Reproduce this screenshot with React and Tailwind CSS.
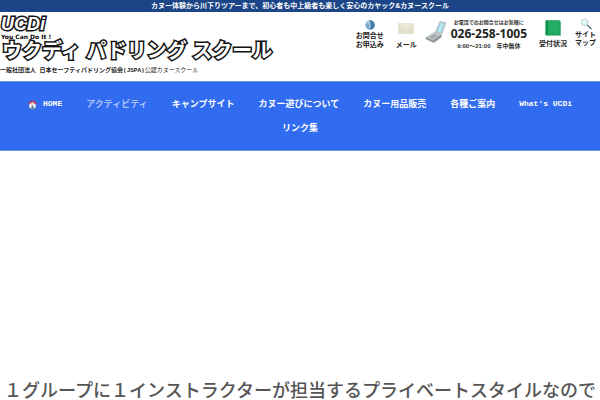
import { clsx } from "clsx";

const menu = [
  { label: "アクティビティ", dim: true },
  { label: "キャンプサイト" },
  { label: "カヌー遊びについて" },
  { label: "カヌー用品販売" },
  { label: "各種ご案内" },
  { label: "What's UCDi", latin: true },
  { label: "リンク集" },
];

function InfoIcon() {
  return (
    <svg viewBox="0 0 20 20" className="h-[10px] w-[10px]" aria-hidden="true">
      <circle cx="10" cy="10" r="9.5" fill="#7fabcb" />
      <path d="M10 .5a9.500 9.500 0 0 1 0 19z" fill="#3f7ba8" />
      <path d="M3 7a8 8 0 0 1 6-5v6z" fill="#a9cae0" />
      <path d="M9 4h2v2H9zM9 8h2v8H9z" fill="#c9deeb" />
    </svg>
  );
}

function MailIcon() {
  return (
    <svg viewBox="0 0 46 32" className="h-[11px] w-4" aria-hidden="true">
      <rect width="46" height="32" rx="1" fill="#e3e3cd" />
      <path d="M0 1 23 20 46 1z" fill="#eaead8" />
      <path d="M0 31 17 15M46 31 29 15M0 1l23 19L46 1" fill="none" stroke="#d6d6be" />
    </svg>
  );
}

function PhoneIcon() {
  return (
    <svg viewBox="0 0 66 66" className="h-[22px] w-[22px]" aria-hidden="true">
      <path d="m2 50 28-17 19 10q3 2 1 5L30 64q-4 2-8 0L3 55q-3-2-1-5z" fill="#92979b" />
      <path d="m3 48 28-17 17 9-25 18z" fill="#c5cacc" />
      <path d="m12 48 17-10 9 5-15 10z" fill="#a4aaae" />
      <path d="M30 33 42 4q1-3 5-3l13 2q4 1 3 5L52 38q-1 5-5 4z" fill="#bac5ca" />
      <path d="M36 30 45 6l13 2-10 28z" fill="#9cdcea" />
      <path d="m40 29 9-22 5 1-9 25z" fill="#c6f0f6" />
    </svg>
  );
}

function BookIcon() {
  return (
    <svg viewBox="0 0 48 48" className="h-4 w-4" aria-hidden="true">
      <path d="M1 4q0-3 3-3h40v3h3v43H4q-3 0-3-3z" fill="#129c52" />
      <path d="M44 3v38H7V3z" fill="#22ae62" />
      <path d="M7 2v40" stroke="#08773b" strokeWidth="2" />
      <path d="M4 46h42" stroke="#a7d8bb" strokeWidth="2" />
    </svg>
  );
}

function SearchIcon() {
  return (
    <svg viewBox="0 0 36 36" className="h-3 w-3" aria-hidden="true">
      <circle cx="14" cy="13" r="10" fill="#dff3f4" stroke="#b4d3d6" strokeWidth="3" />
      <path d="M9 12a6 6 0 0 1 7-5" fill="none" stroke="#fff" strokeWidth="2" />
      <path d="m23 22 10 10" stroke="#536d78" strokeWidth="4" strokeLinecap="round" />
    </svg>
  );
}

function HomeIcon() {
  return (
    <svg viewBox="0 0 28 28" className="h-[9px] w-[9px]" aria-hidden="true">
      <path d="M4 12 14 5l10 7v15H4z" fill="#f4eef2" />
      <path d="M1 14V10L10 2h9l8 8v4l-4-1-9-7-9 7z" fill="#c63a55" />
      <path d="M11 18h6v9h-6z" fill="#52668e" />
      <path d="M11 11h6v3h-6z" fill="#a0acc8" />
      <path d="M2 26h7M19 26h7" stroke="#397256" strokeWidth="3" />
    </svg>
  );
}

export default function App() {
  return (
    <div className="bg-white font-['Liberation_Sans','Noto_Sans_CJK_JP',sans-serif] text-[#222]">
      <p className="bg-[#1c4587] text-center text-[7px] leading-3 font-bold text-white">
        カヌー体験から川下りツアーまで、初心者も中上級者も楽しく安心のカヤック&amp;カヌースクール
      </p>

      <header>
        <div className="flex items-start justify-between">
          <a href="#" className="block pt-1 font-bold whitespace-nowrap text-black">
            <span className="block pl-px text-[18px] leading-[17px] text-white italic [-webkit-text-stroke:3px_#111] [paint-order:stroke]">
              UCDi
            </span>
            <span className="block pl-px font-['DejaVu_Sans'] text-[6px] leading-[8px]">You Can Do It !</span>
            <h1 className="pl-[2px] text-[20px] leading-[21px] text-white [-webkit-text-stroke:3px_#111] [paint-order:stroke]">
              ウクディ パドリング スクール
            </h1>
          </a>

          {/* contact */}
          <div className="flex items-start pt-[6px] pr-1 text-[7px] leading-[9px] font-bold whitespace-nowrap">
            <a href="#" className="mt-[2px] flex flex-col items-center gap-px">
              <InfoIcon />
              <span>お問合せ<br />お申込み</span>
            </a>
            <a href="#" className="mt-[5px] ml-3 flex flex-col items-center gap-[6px]">
              <MailIcon />
              <span>メール</span>
            </a>
            <div className="mt-[3px] ml-2">
              <PhoneIcon />
            </div>
            <div className="ml-1 flex flex-col items-center text-[#333]">
              <span className="text-[5px] leading-[9px]">お電話でのお問合せはお気軽に</span>
              <span className="font-['Noto_Sans'] text-[12px] leading-[13px] text-[#222]">026-258-1005</span>
              <span className="text-[6px] leading-[12px]">9:00～21:00　年中無休</span>
            </div>
            <a href="#" className="mt-[2px] ml-3 flex flex-col items-center gap-[3px]">
              <BookIcon />
              <span>受付状況</span>
            </a>
            <a href="#" className="ml-2 flex flex-col items-center gap-px leading-[8px]">
              <SearchIcon />
              <span>サイト<br />マップ</span>
            </a>
          </div>
        </div>
        <p className="pt-[3px] pb-[4px] font-['Liberation_Mono','Noto_Sans_CJK_JP',monospace] text-[6px] leading-3">
          <b>一般社団法人 日本セーフティパドリング協会(JSPA)</b>公認カヌースクール
        </p>
      </header>

      <nav className="border-y border-[#6f94dc] bg-[#306bf0] py-[10px] text-[9px] leading-6 font-bold text-white">
        <ul className="flex flex-wrap justify-center">
          <li>
            <a href="#" className="flex items-center gap-[6px] px-3 font-['Liberation_Mono'] text-[8px] leading-6">
              <HomeIcon />
              HOME
            </a>
          </li>
          {menu.map((item) => (
            <li key={item.label}>
              <a
                href="#"
                className={clsx(
                  "block px-3",
                  item.dim && "text-[#a9c2fa]",
                  item.latin && "font-['Liberation_Mono'] text-[8px] leading-6"
                )}
              >
                {item.label}
              </a>
            </li>
          ))}
        </ul>
      </nav>

      <main className="pt-56">
        <h2 className="overflow-hidden text-center text-[18px] leading-8 font-medium whitespace-nowrap text-[#555]">
          １グループに１インストラクターが担当するプライベートスタイルなので
        </h2>
      </main>
    </div>
  );
}
